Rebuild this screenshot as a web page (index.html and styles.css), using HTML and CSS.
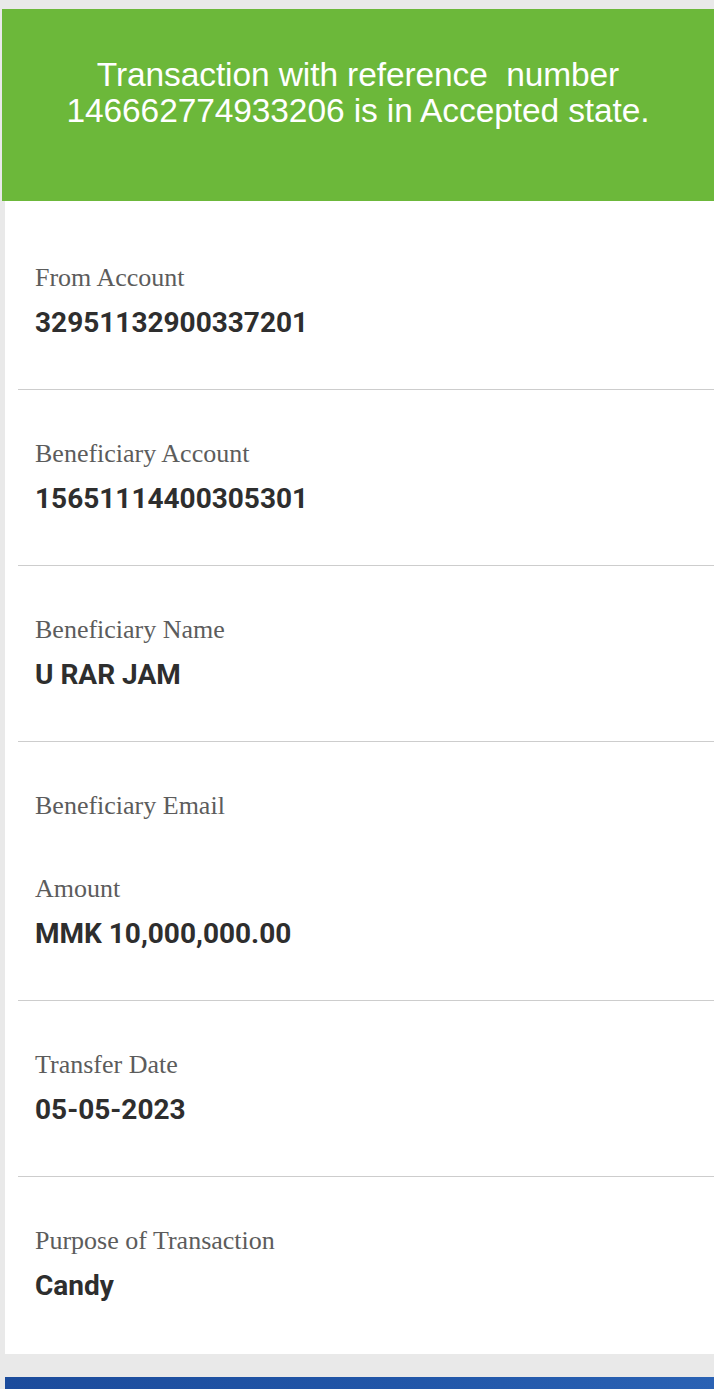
FILE: index.html
```html
<!DOCTYPE html>
<html lang="en">
<head>
<meta charset="utf-8">
<title>Transaction Details</title>
<link rel="stylesheet" href="styles.css">
</head>
<body>
<div class="screen">
  <div class="banner">
    <p class="banner-text">Transaction with reference&nbsp; number<br>146662774933206 is in Accepted state.</p>
  </div>
  <div class="card">
    <div class="row">
      <div class="field">
        <div class="label">From Account</div>
        <div class="value">32951132900337201</div>
      </div>
    </div>
    <div class="row">
      <div class="field">
        <div class="label">Beneficiary Account</div>
        <div class="value">15651114400305301</div>
      </div>
    </div>
    <div class="row">
      <div class="field">
        <div class="label">Beneficiary Name</div>
        <div class="value">U RAR JAM</div>
      </div>
    </div>
    <div class="row">
      <div class="field">
        <div class="label">Beneficiary Email</div>
        <div class="value"></div>
      </div>
      <div class="field">
        <div class="label">Amount</div>
        <div class="value">MMK 10,000,000.00</div>
      </div>
    </div>
    <div class="row">
      <div class="field">
        <div class="label">Transfer Date</div>
        <div class="value">05-05-2023</div>
      </div>
    </div>
    <div class="row row-last">
      <div class="field">
        <div class="label">Purpose of Transaction</div>
        <div class="value">Candy</div>
      </div>
    </div>
  </div>
  <div class="footer-bar"></div>
</div>
</body>
</html>
```
FILE: styles.css
```css
* { box-sizing: border-box; }
html, body { margin: 0; padding: 0; }
body {
  background: #e9e9e9;
  width: 714px;
  height: 1389px;
  overflow: hidden;
}
.screen {
  display: flex;
  flex-direction: column;
  padding-top: 9px;
  height: 1389px;
}
.banner {
  background: #6cb83a;
  height: 192px;
  margin-left: 2px;
  display: flex;
  justify-content: center;
  padding-top: 48px;
}
.banner-text {
  margin: 0;
  color: #ffffff;
  font-family: "Liberation Sans", Arial, sans-serif;
  font-size: 33.5px;
  line-height: 36px;
  text-align: center;
  letter-spacing: -0.1px;
  white-space: nowrap;
}
.card {
  background: #ffffff;
  margin-left: 5px;
}
.row {
  display: flex;
  flex-direction: column;
  gap: 40px;
  margin-left: 13px;
  padding: 51px 0 51px 17px;
  border-bottom: 1.5px solid #cdcdcd;
}
.row:first-child { padding-top: 64px; }
.row-last { border-bottom: none; padding-bottom: 53px; }
.field {
  display: flex;
  flex-direction: column;
  gap: 17px;
}
.label {
  font-family: "Liberation Serif", "Times New Roman", serif;
  font-size: 26px;
  line-height: 26px;
  color: #5c5c5c;
}
.value {
  font-family: Roboto, "Liberation Sans", sans-serif;
  font-weight: 700;
  font-size: 28px;
  line-height: 30px;
  color: #2e2e2e;
}
.value:empty { height: 0; }
.footer-bar {
  flex: 1;
  margin-top: 23px;
  background: linear-gradient(90deg, #1c4c9c 0%, #2156a8 55%, #2a62b4 100%);
  margin-left: 5px;
}
```
